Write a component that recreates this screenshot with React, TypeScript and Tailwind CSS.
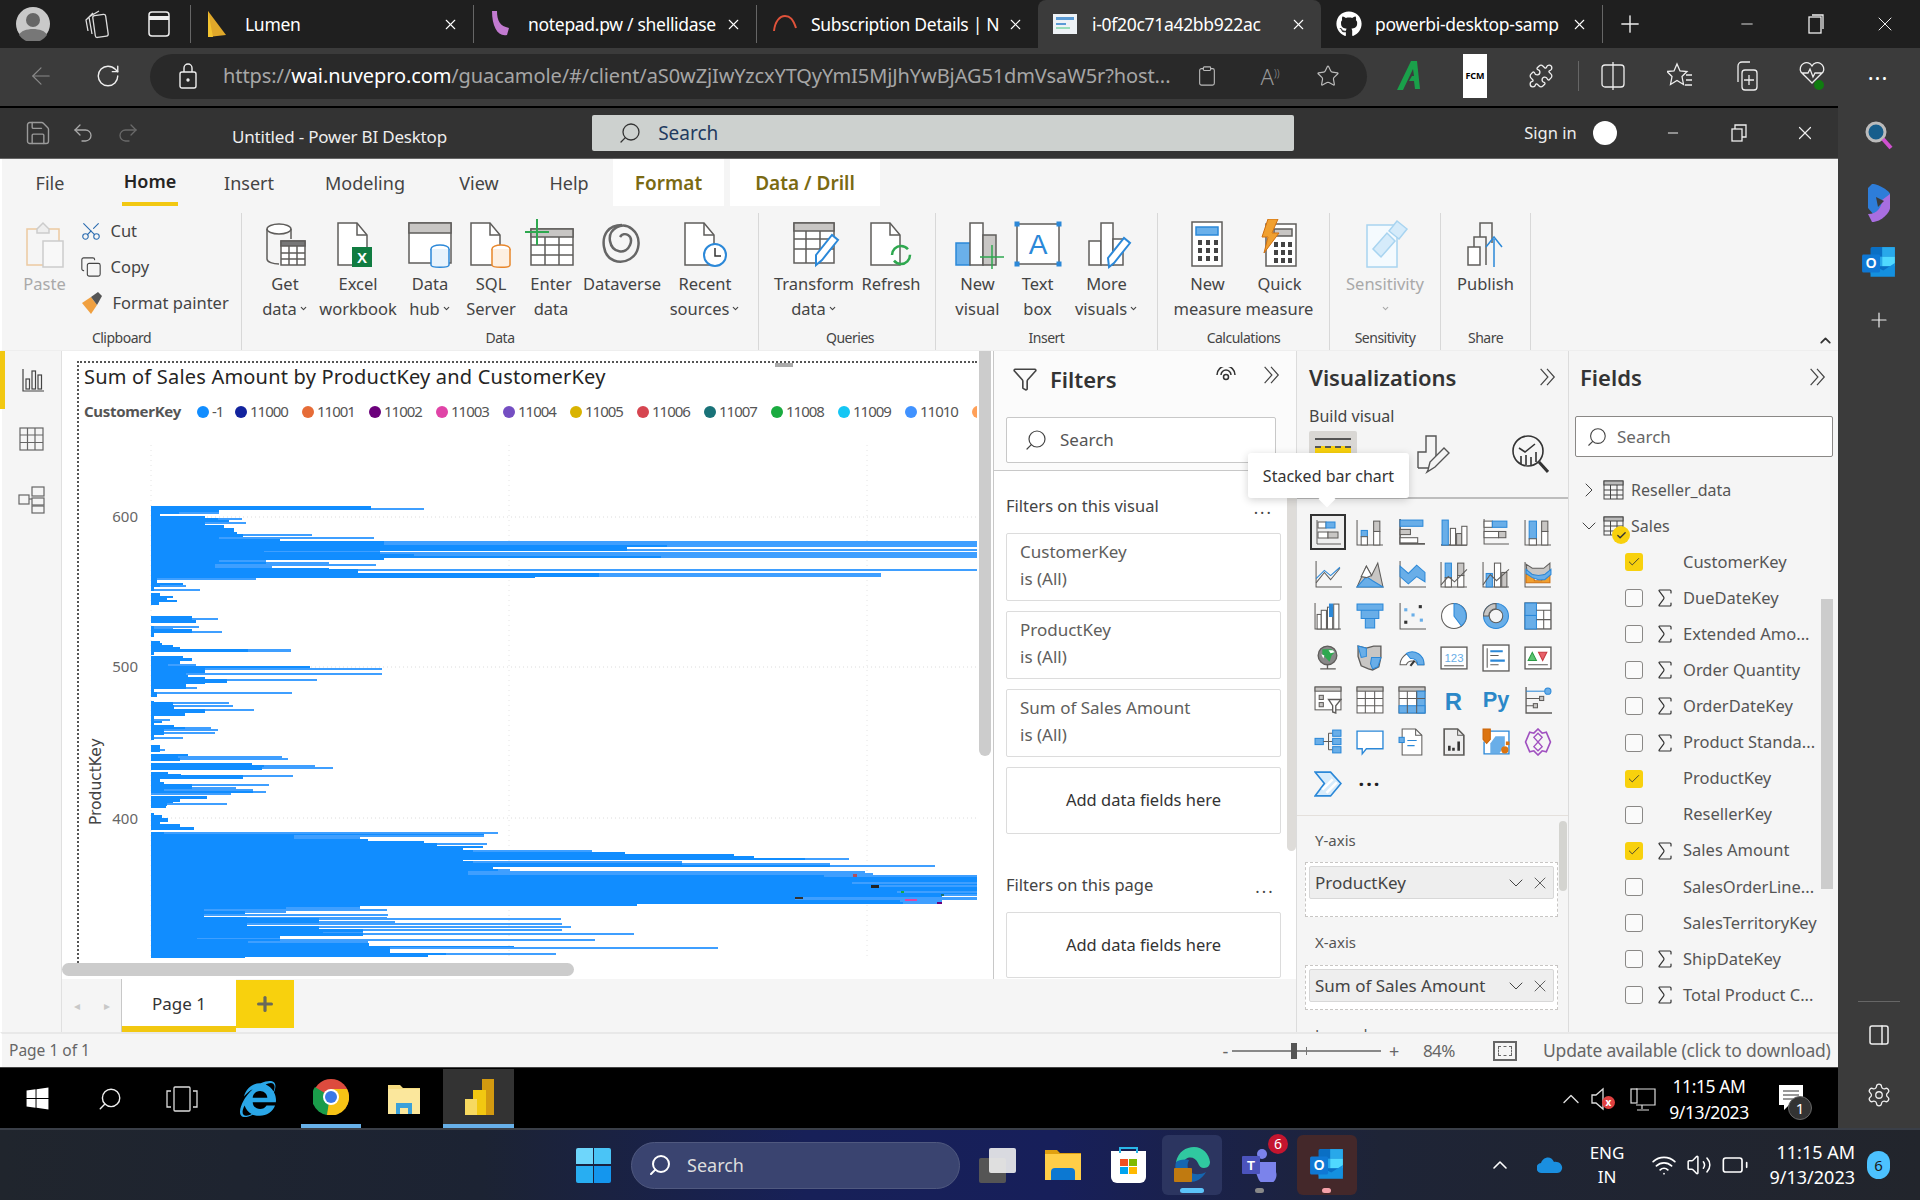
import React from 'react';
import { ArrowLeft, RotateCw, Clipboard, Star, Puzzle, Copy, Settings, PanelRight, Search, ChevronRight, ChevronDown, ChevronUp, X, Plus, Minus, Check, Wifi, Volume2, Battery, Scissors, Undo2, Redo2, Save, Funnel, Sigma } from 'lucide-react';
import { FaGithub, FaWindows, FaInternetExplorer } from 'react-icons/fa';

const G = '#5f5d5b', L = '#c8c6c4', B = '#2b88d8', F = '#69aee8', W = '#ffffff';

function Chevrons({ size = 22, color = '#444' }: { size?: number; color?: string }) {
  return <svg width={size} height={size} viewBox="0 0 22 22" fill="none" stroke={color} strokeWidth="1.3"><path d="M4 2l8 9-8 9M11 2l8 9-8 9" /></svg>;
}

function Ic({ children, s = 30 }: { children: React.ReactNode; s?: number }) {
  return <svg width={s} height={s} viewBox="0 0 27 27" fill="none" stroke={G} strokeWidth="1">{children}</svg>;
}
const Bars = (a: number[][], blue: number[] = []) => a.map((r, i) => <rect key={i} x={r[0]} y={r[1]} width={r[2]} height={r[3]} fill={blue.includes(i) ? F : r[4] ? L : W} stroke={blue.includes(i) ? B : G} />);

const vizIcons: React.ReactNode[] = [
  <><path d="M2 1v24h24" />{Bars([[3, 3, 8, 6], [11, 3, 9, 6, 0], [3, 13, 10, 6], [13, 13, 10, 6, 1]], [1])}</>,
  <><path d="M1 2v24h25" />{Bars([[5, 12, 6, 6], [5, 18, 6, 8], [17, 3, 6, 10, 1], [17, 13, 6, 13]], [0])}</>,
  <><path d="M2 1v24h24" strokeWidth="1.6" />{Bars([[2, 2, 22, 6], [2, 11, 10, 5, 1], [2, 19, 17, 5]], [0])}</>,
  <><path d="M1 26h25" strokeWidth="1.6" />{Bars([[2, 2, 6, 24], [10, 10, 5, 16], [16, 15, 5, 11, 1], [21, 8, 5, 18]], [0])}</>,
  <><path d="M2 1v24h24" />{Bars([[2, 3, 8, 6], [10, 3, 14, 6], [2, 13, 14, 6], [16, 13, 7, 6, 1]], [1])}</>,
  <><path d="M1 2v24h25" />{Bars([[5, 3, 7, 17], [5, 20, 7, 6], [17, 3, 6, 10, 1], [17, 13, 6, 13]], [0])}</>,
  <><path d="M2 1v25h25" /><path d="M2 22L10 12l6 7 9-11" stroke={G} /><path d="M2 18l8-8 6 5 9-8" stroke={B} /></>,
  <><path d="M1 26L10 6l5 9 6-12 5 23z" fill={L} /><path d="M1 26l9-10 6 4 10 6z" fill={F} stroke={B} /><path d="M10 6l5 9-5 2-5-1z" fill={W} /></>,
  <><path d="M2 1v25h25" /><path d="M2 6l8 7 8-8 8 7v9l-8-5-8 7-8-7z" fill={F} stroke={B} /></>,
  <><path d="M1 2v24h25" />{Bars([[5, 3, 6, 14], [17, 3, 6, 12, 1], [5, 17, 6, 9], [17, 15, 6, 11]], [0])}<path d="M1 24l7-8 6 5 12-12" /></>,
  <><path d="M1 2v24h25" />{Bars([[4, 13, 6, 13], [12, 3, 6, 23], [19, 12, 5, 14, 1]], [0])}<path d="M1 24l7-10 6 6 12-11" /></>,
  <><path d="M1 2v24h25" /><path d="M2 4l6 4h11l6-5v8l-5 5h-12l-5-4z" fill={L} /><path d="M2 14h7l1 6h7l2-6h6v8h-23z" fill="#f0a030" stroke="#d07010" /><path d="M2 9l6 5 6 1 6-1 6-5v5l-6 5h-6l-6-2-6-4z" fill={F} stroke={B} /></>,
  <><path d="M1 1v25h25" />{Bars([[3, 12, 4, 14], [7, 8, 5, 18], [13, 5, 5, 21], [19, 2, 5, 24]], [])}<rect x="15" y="2" width="3" height="12" fill={B} stroke={B} /></>,
  <><path d="M1 2h25v6h-25zM5 8h17v8h-17zM9 16h9v9h-9z" fill={F} stroke={B} /></>,
  <><path d="M2 1v25h25" /><rect x="6" y="18" width="3" height="3" fill="#333" stroke="none" /><rect x="20" y="3" width="3" height="3" fill="#333" stroke="none" /><rect x="6" y="6" width="3" height="3" fill={F} stroke="none" /><rect x="13" y="11" width="3" height="3" fill={F} stroke="none" /><rect x="21" y="16" width="3" height="3" fill={F} stroke="none" /></>,
  <><circle cx="13.5" cy="13.5" r="12" fill={W} /><path d="M13.5 1.5a12 12 0 0 1 7 21.5l-7-9.5z" fill={F} stroke={B} /></>,
  <><circle cx="13.5" cy="13.5" r="12" fill={F} stroke={B} /><path d="M13.5 1.5a12 12 0 0 0-12 12h5a7 7 0 0 1 7-7z" fill={L} stroke={G} /><circle cx="13.5" cy="13.5" r="6.5" fill="#f5f5f5" stroke={G} /></>,
  <><rect x="1" y="1" width="25" height="25" fill={W} strokeWidth="1.3" /><rect x="1" y="1" width="11" height="12" fill={F} stroke={B} /><rect x="1" y="13" width="11" height="13" fill={F} stroke={B} /><path d="M12 8h14M19 8v18M12 17h14" /></>,
  <><circle cx="13" cy="11" r="9" fill="#888" strokeWidth="1.3" /><path d="M8 5h9l3 3-3 3-2 6-4-4-3-3z" fill="#2ea84f" stroke="none" /><path d="M14 6h4l2 2-4 1zM7 10l3 1-1 3z" fill="#fff" stroke="none" /><path d="M6 24h15M13 20v4" strokeWidth="1.3" /></>,
  <><path d="M2 2l8 2 7-2h7v11l-2 9-6 3-4-1-7-3-3-9z" fill={L} strokeWidth="1.3" /><path d="M2 2l8 2v8l-5 1zM15 13h9l-3 9-5 2-2-5z" fill={F} stroke={B} /></>,
  <><path d="M2 20a11.5 11.5 0 0 1 23 0h-6a6 6 0 0 0-11 0z" fill={W} /><path d="M8 9a11.5 11.5 0 0 1 17 11h-6a6 6 0 0 0-7-6z" fill={F} stroke={B} /><path d="M12 21l4-5" strokeWidth="2" stroke="#333" /></>,
  <><rect x="1" y="3" width="25" height="21" fill="#fff" strokeWidth="1.3" /><text x="13.5" y="17" textAnchor="middle" fontSize="11" fill={F} stroke="none" fontFamily="Liberation Sans">123</text><path d="M4 21h19" /></>,
  <><rect x="1" y="1" width="25" height="25" fill="#fff" strokeWidth="1.3" /><path d="M5 4v19" /><path d="M8 7h12M8 16h14" stroke={B} strokeWidth="2" /><path d="M8 11h8M8 20h8" /></>,
  <><rect x="1" y="3" width="25" height="21" fill="#fff" strokeWidth="1.3" /><path d="M4 16l4-8 4 8z" fill="#5cc470" stroke="#2c9a44" /><path d="M14 8h8l-4 8z" fill="#e8626a" stroke="#c83a42" /><path d="M4 20h19" /></>,
  <><rect x="1" y="1" width="25" height="22" fill="#fff" /><rect x="1" y="1" width="25" height="4" fill={L} /><rect x="5" y="9" width="4" height="4" fill={L} /><rect x="5" y="16" width="4" height="4" fill={L} /><path d="M14 13h12l-5 6v7l-3-1v-6z" fill="#fff" strokeWidth="1.3" /></>,
  <><rect x="1" y="1" width="25" height="25" fill="#fff" /><rect x="1" y="1" width="25" height="4" fill={L} /><path d="M1 12h25M1 19h25M9 5v21M18 5v21" /></>,
  <><rect x="1" y="1" width="25" height="25" fill="#fff" /><rect x="1" y="1" width="25" height="4" fill={L} /><rect x="18" y="5" width="8" height="21" fill={F} stroke={B} /><rect x="1" y="19" width="25" height="7" fill={F} stroke={B} /><path d="M1 12h25M9 5v21M18 5v21" /></>,
  <><text x="13" y="23" textAnchor="middle" fontSize="23" fontWeight="700" fill="#2b88c8" stroke="none" fontFamily="Liberation Sans">R</text></>,
  <><text x="13.5" y="20" textAnchor="middle" fontSize="21" fontWeight="700" fill="#2b88c8" stroke="none" fontFamily="Liberation Sans">Py</text></>,
  <><path d="M2 1v25h25" strokeWidth="1.3" /><path d="M2 5h18" stroke={B} /><circle cx="23" cy="5" r="3" fill={F} stroke={B} /><path d="M2 12h14M2 19h10" /><rect x="15" y="10" width="4" height="4" fill={L} /><rect x="9" y="17" width="4" height="4" fill={L} /></>,
  <><rect x="1" y="10" width="8" height="6" fill={F} stroke={B} /><path d="M9 13h5M14 5v16M14 5h4M14 13h4M14 21h4" /><rect x="18" y="2" width="8" height="6" fill={F} stroke={B} /><rect x="18" y="10" width="8" height="6" fill={F} stroke={B} /><rect x="18" y="18" width="8" height="6" fill={F} stroke={B} /></>,
  <><path d="M1 3h25v17h-16l-4 5v-5h-5z" fill="#fff" stroke={B} strokeWidth="1.3" /></>,
  <><path d="M4 1h13l6 6v19h-19z" fill="#fff" /><path d="M17 1v6h6" /><rect x="1" y="9" width="5" height="5" fill={F} stroke={B} /><path d="M9 12h9M9 17h7" stroke={B} /></>,
  <><path d="M4 1h13l6 6v19h-19z" fill="#eee" strokeWidth="1.6" /><path d="M17 1v6h6" /><path d="M9 22v-5M13 22v-3M18 22v-9" stroke="#333" strokeWidth="2.5" /></>,
  <><path d="M6 3h20v22h-24v-12" stroke={B} strokeWidth="1.3" fill="#fff" /><path d="M13 8h9v9l-5 7h-9v-9z" fill={F} stroke="none" /><path d="M1 1h7v10l-3.500 4-3.500-4z" fill="#dc7410" stroke="#c96408" /><circle cx="22" cy="21" r="3.500" fill="#dc7410" stroke="none" /><rect x="23" y="13" width="3.500" height="3.500" fill="#dc7410" stroke="none" /></>,
  <><path d="M13.500 1l4 4 4-1 4 9.500-4 9.500-4-1-4 4-4-4-4 1-4-9.500 4-9.500 4 1z" stroke="#a050c0" strokeWidth="1.6" fill="none" /><path d="M13.500 5l4 4-4 4.500-4-4.500zM13.500 13.500l4 4.500-4 4-4-4z" stroke="#a050c0" strokeWidth="1.3" /></>,
  <><path d="M1 2h15l10 11-10 12h-15l9-12z" fill="#d8ecfb" stroke={B} strokeWidth="1.6" /><path d="M8 19l10-10M12 22l10-10" stroke="#fff" strokeWidth="2.5" /></>,
];

const chartA: number[][] = [
  [467, 580, 580], [473, 580, 663], [480, 342, 342], [485, 279, 342], [491, 250, 250], [497, 320, 320], [503, 340, 378], [510, 358, 358], [516, 320, 384], [525, 350, 350], [535, 365, 365], [545, 370, 370], [551, 380, 487], [558, 380, 380], [562, 342, 585], [568, 437, 437], [572, 600, 1530], [580, 600, 1530], [585, 1044, 1530], [592, 982, 982], [597, 982, 1530], [602, 412, 595], [606, 595, 1530], [612, 647, 1530], [618, 1035, 1530], [625, 600, 600], [630, 342, 415], [635, 415, 515], [642, 335, 588], [648, 335, 425], [654, 515, 515], [658, 560, 1530], [665, 560, 560], [670, 938, 1380], [676, 938, 1380], [680, 838, 838], [685, 245, 400], [692, 245, 245], [698, 285, 285], [705, 250, 290], [712, 240, 240], [718, 240, 312], [724, 235, 235], [730, 250, 250], [737, 270, 270], [745, 260, 260], [750, 276, 276], [756, 247, 247], [765, 235, 235],
  [798, 300, 300], [804, 300, 340], [810, 305, 305], [818, 235, 235], [827, 240, 310], [834, 240, 270], [838, 300, 300], [842, 300, 347], [848, 240, 240], [860, 235, 235], [873, 250, 250], [880, 253, 253], [886, 270, 270], [892, 280, 280],
  [896, 387, 455],
];
const chartB: number[][] = [
  [3, 387, 455], [6, 240, 240], [14, 235, 235], [18, 285, 285], [25, 300, 300], [34, 280, 280], [42, 262, 305], [48, 484, 484], [54, 320, 598], [62, 320, 320], [68, 290, 597], [74, 293, 293], [80, 320, 320], [86, 355, 495], [94, 355, 355], [98, 320, 320], [103, 290, 290], [110, 290, 307], [116, 240, 240], [125, 245, 456], [133, 245, 245], [142, 235, 235], [152, 240, 240], [157, 270, 358], [165, 272, 363], [172, 272, 272], [178, 320, 397], [185, 320, 320], [190, 288, 288], [198, 240, 240], [207, 240, 265], [213, 252, 252], [220, 240, 240], [226, 272, 272], [232, 288, 330], [238, 255, 340], [245, 255, 335], [255, 240, 240], [260, 240, 285], [270, 235, 235], [284, 250, 250], [296, 250, 257], [305, 235, 235], [311, 293, 293], [318, 278, 440], [325, 280, 450], [333, 235, 235], [338, 393, 393], [344, 413, 493], [351, 410, 520], [360, 235, 235], [365, 262, 262], [371, 282, 282], [376, 380, 458], [384, 380, 380], [388, 250, 250], [396, 255, 255], [402, 300, 420], [410, 300, 368], [418, 255, 395], [424, 395, 415], [430, 235, 360], [438, 323, 323], [447, 280, 280], [455, 270, 270], [460, 260, 354], [468, 258, 258], [474, 235, 235], [488, 240, 240], [495, 252, 252], [504, 262, 262], [515, 250, 250], [522, 280, 280], [530, 302, 302], [540, 235, 235], [545, 255, 779], [551, 757, 757], [556, 460, 757], [562, 460, 563], [568, 575, 575], [574, 663, 663], [580, 683, 762], [588, 755, 755], [595, 725, 725], [600, 740, 927], [606, 978, 978], [612, 1150, 1150], [618, 1180, 1180], [624, 1260, 1330], [630, 725, 725], [634, 740, 1068], [640, 1068, 1300], [646, 1300, 1465], [652, 772, 772], [658, 780, 798], [664, 732, 1355], [670, 732, 1368], [676, 1290, 1530], [682, 1530, 1530], [696, 1335, 1530], [702, 1530, 1530], [706, 1365, 1530], [712, 1530, 1530], [724, 1405, 1530], [730, 1530, 1530], [733, 1475, 1530], [740, 1245, 1530], [747, 1245, 1530], [750, 1410, 1475], [756, 1415, 1475], [761, 997, 997], [767, 563, 563], [770, 447, 563], [776, 318, 605], [784, 383, 447], [792, 318, 607], [800, 385, 605], [805, 498, 878], [812, 498, 618], [820, 385, 880], [827, 498, 893], [836, 567, 880], [845, 505, 567], [850, 567, 992], [858, 438, 438], [863, 308, 438], [868, 438, 932], [874, 388, 575], [880, 577, 577], [887, 804, 804], [892, 610, 1124], [898, 610, 610], [908, 698, 870], [915, 670, 670], [922, 382, 382], [927, 380, 475],
];
const rowsFull = [
  ...chartA.map(r => [Math.round(350 + r[0] / 3), r[1] / 1.568, r[2] / 1.568]),
  ...chartB.map(r => [Math.round(650 + r[0] / 3), r[1] / 1.568, r[2] / 1.568]),
];

function Chart() {
  return (
    <svg width="898" height="528" viewBox="78 430 898 528" className="block">
      {[150, 508, 866].map(x => <path key={x} d={`M${x} 445V958`} stroke="#e4e4e4" strokeDasharray="1 4" />)}
      {[517, 667, 818].map(y => <path key={y} d={`M150 ${y}H976`} stroke="#dcdcdc" strokeDasharray="1 3" />)}
      {rowsFull.map((r, i) => {
        const next = i < rowsFull.length - 1 ? rowsFull[i + 1][0] : 958;
        const h = next - r[0];
        if (h <= 0) return null;
        return (
          <g key={i} shapeRendering="crispEdges">
            <rect x="150" y={r[0]} width={Math.max(r[1] - 150, 0)} height={h} fill="#118dff" />
            {r[2] > r[1] && <rect x={r[1]} y={r[0]} width={r[2] - r[1]} height={h >= 3 ? h - 1 : h} fill="#3f9fff" />}
          </g>
        );
      })}
      <rect x="852" y="874" width="4" height="3" fill="#b05060" /><rect x="870" y="885" width="8" height="3" fill="#222" /><rect x="900" y="891" width="3" height="2" fill="#1aab40" /><rect x="940" y="894" width="3" height="2" fill="#197278" /><rect x="794" y="897" width="8" height="2" fill="#333" /><rect x="904" y="899" width="12" height="2" fill="#e044a7" /><rect x="936" y="902" width="5" height="2" fill="#6b007b" />
      <text x="137" y="522" textAnchor="end" fontSize="15" fill="#666" fontFamily="Noto Sans">600</text>
      <text x="137" y="672" textAnchor="end" fontSize="15" fill="#666" fontFamily="Noto Sans">500</text>
      <text x="137" y="824" textAnchor="end" fontSize="15" fill="#666" fontFamily="Noto Sans">400</text>
      <text transform="translate(100 825) rotate(-90)" fontSize="15.500" fill="#444" fontFamily="DejaVu Sans">ProductKey</text>
    </svg>
  );
}

function RB({ w, lines, caret, children, dim }: { w: number; lines: string[]; caret?: boolean; children: React.ReactNode; dim?: boolean }) {
  return (
    <div className={`flex flex-col items-center ${dim ? 'text-[#a9a9a9]' : 'text-[#444]'}`} style={{ width: w }}>
      <div className="h-[58px] w-[52px] pt-[6px] flex items-center justify-center">{children}</div>
      {lines.map((l, i) => (
        <div key={i} className="h-[25px] leading-[25px] text-[16.500px] whitespace-nowrap flex items-center gap-[2px]">
          {l}{caret && i === lines.length - 1 && <ChevronDown size={9} strokeWidth={3} />}
        </div>
      ))}
    </div>
  );
}
function RI({ children }: { children: React.ReactNode }) {
  return <svg width="52" height="52" viewBox="0 0 52 52" fill="none" stroke="#5f5d5b" strokeWidth="1.5">{children}</svg>;
}
const Doc = <path d="M6 4h19l10 12v30h-29z" fill="#fff" />;
const DocF = <path d="M25 4v12h10" />;

function Group({ w, label, children, pl = 0 }: { w: number; label: string; children: React.ReactNode; pl?: number }) {
  return (
    <div className="flex flex-col items-center shrink-0 h-[137px] border-r border-[#d8d8d8]" style={{ width: w, paddingLeft: pl }}>
      <div className="flex flex-1 justify-center">{children}</div>
      <div className="h-[22px] leading-[20px] text-[14px] tracking-[-0.5px] text-[#444]">{label}</div>
    </div>
  );
}

function Cell({ w, children, className = '' }: { w: number; children?: React.ReactNode; className?: string }) {
  return <div className={`flex items-center justify-center shrink-0 ${className}`} style={{ width: w }}>{children}</div>;
}

function BrowserTab({ w, icon, title, active }: { w: number; icon: React.ReactNode; title: string; active?: boolean }) {
  return (
    <div className={`flex items-center shrink-0 h-12 pl-[15px] pr-[14px] text-white text-[17.500px] ${active ? 'bg-[#3b3b3b] rounded-t-[8px]' : ''}`} style={{ width: w }}>
      <div className="w-[39px] flex items-center shrink-0">{icon}</div>
      <div className="flex-1 overflow-hidden whitespace-nowrap tracking-[-0.3px]">{title}</div>
      <X size={17} strokeWidth={1.5} className="ml-2 shrink-0" />
    </div>
  );
}
const Sep = () => <div className="w-px h-[38px] bg-[#666] shrink-0" />;

function FilterCard({ a, b }: { a: string; b: string }) {
  return (
    <div className="h-[68px] w-[275px] border border-[#dcdcdc] rounded-[2px] bg-white px-[13px] pt-[4px] text-[17px] leading-[27px] text-[#605e5c]">
      <div>{a}</div><div>{b}</div>
    </div>
  );
}
function AddCard({ h }: { h: number }) {
  return <div className="w-[275px] border border-[#dcdcdc] rounded-[2px] bg-white flex items-center justify-center text-[16.500px] text-[#333]" style={{ height: h }}>Add data fields here</div>;
}
function WellBox({ text, h }: { text: string; h: number }) {
  return (
    <div className="ml-[8px] w-[253px] border border-dashed border-[#c8c6c4] bg-white p-[3px]" style={{ height: h }}>
      <div className="h-[33px] bg-[#eeeeee] border border-[#d8d8d8] rounded-[2px] flex items-center pl-[5px] pr-[3px] text-[17px] text-[#444]">
        <span className="flex-1 whitespace-nowrap">{text}</span>
        <ChevronDown size={24} strokeWidth={1} className="mr-[2px]" />
        <X size={20} strokeWidth={1} />
      </div>
    </div>
  );
}
function Field({ name, sigma, checked }: { name: string; sigma?: boolean; checked?: boolean }) {
  return (
    <div className="h-[36.100px] flex items-center pl-[56px]">
      <div className={`w-[18px] h-[18px] rounded-[3px] flex items-center justify-center shrink-0 ${checked ? 'bg-[#f8d10d]' : 'border border-[#8a8886] bg-[#fafafa]'}`}>
        {checked && <Check size={14} strokeWidth={1.5} color="#333" />}
      </div>
      <div className="w-[40px] flex justify-center shrink-0 pl-[3px]">
        {sigma && <Sigma size={24} strokeWidth={1.2} color="#333" />}
      </div>
      <div className="text-[16.500px] text-[#555] whitespace-nowrap">{name}</div>
    </div>
  );
}
function TableIc() {
  return <svg width="21" height="20" viewBox="0 0 21 20" fill="none" stroke="#444" strokeWidth="1"><rect x="1" y="1" width="19" height="18" /><rect x="1" y="1" width="19" height="4" fill="#bbb" /><path d="M1 10h19M1 15h19M7.500 5v14M14 5v14" /></svg>;
}

const legend = [['-1', '#118DFF'], ['11000', '#12239E'], ['11001', '#E66C37'], ['11002', '#6B007B'], ['11003', '#E044A7'], ['11004', '#744EC2'], ['11005', '#D9B300'], ['11006', '#D64550'], ['11007', '#197278'], ['11008', '#1AAB40'], ['11009', '#15C6F4'], ['11010', '#4092FF'], ['', '#FFA058']];

function OutlookLogo({ s = 34 }: { s?: number }) {
  return (
    <svg width={s} height={s} viewBox="0 0 34 34">
      <rect x="9" y="2" width="23" height="26" rx="1.500" fill="#0a6fc4" />
      <rect x="20" y="2" width="12" height="9" fill="#28a8ea" /><rect x="9" y="11" width="11" height="9" fill="#28a8ea" /><rect x="20" y="11" width="12" height="9" fill="#50d9ff" />
      <path d="M9 18l12 6 11-7v13h-23z" fill="#1490df" />
      <rect x="1" y="9" width="17" height="17" rx="1.500" fill="#0f78d4" />
      <text x="9.500" y="22" textAnchor="middle" fontSize="13" fontWeight="700" fill="#fff" fontFamily="Liberation Sans">O</text>
    </svg>
  );
}

export default function App() {
  return (
    <div className="relative w-[1920px] h-[1200px] overflow-hidden flex flex-col bg-black font-['Noto_Sans','Open_Sans',sans-serif]">
      {/* Browser tabs */}
      <div className="h-12 bg-[#1f1f1f] flex items-center shrink-0">
        <div className="w-[66px] flex justify-center shrink-0">
          <svg width="34" height="34" viewBox="0 0 34 34"><circle cx="17" cy="17" r="17" fill="#c9c9c9" /><circle cx="17" cy="13" r="7" fill="#666" /><path d="M3 28c3-8 25-8 28 0a17 17 0 0 1-28 0z" fill="#777" /></svg>
        </div>
        <Cell w={62}><svg width="26" height="30" viewBox="0 0 26 30" fill="none" stroke="#ddd" strokeWidth="1.3"><rect x="10" y="6" width="13" height="22" rx="2" transform="rotate(-8 16 17)" /><path d="M8 25L5 8l10-6M4 22L2 11l7-7" /></svg></Cell>
        <Cell w={62}><svg width="22" height="26" viewBox="0 0 22 26" fill="none" stroke="#eee" strokeWidth="1.5"><rect x="1" y="1" width="20" height="24" rx="3" /><path d="M1 7h20" strokeWidth="4" /></svg></Cell>
        <Sep />
        <BrowserTab w={282} title="Lumen" icon={<svg width="22" height="26" viewBox="0 0 22 26"><path d="M2 0l18 24-18 2z" fill="#e0a82a" /><path d="M2 0l5 26h-5z" fill="#f4c430" /></svg>} />
        <Sep />
        <BrowserTab w={282} title="notepad.pw / shellidase" icon={<svg width="22" height="26" viewBox="0 0 22 26"><path d="M3 0h5c0 10 3 15 12 17l-2 7c-9 2-15-8-15-24z" fill="#c27ad0" /></svg>} />
        <Sep />
        <BrowserTab w={281} title="Subscription Details | N" icon={<svg width="26" height="22" viewBox="0 0 26 22" fill="none" stroke="#e0523a" strokeWidth="2"><path d="M2 18C3 8 8 3 13 3s8 3 11 12" /></svg>} />
        <BrowserTab w={283} active title="i-0f20c71a42bb922ac" icon={<svg width="24" height="20" viewBox="0 0 24 20"><rect width="24" height="20" fill="#eef2f6" /><rect x="3" y="3" width="18" height="3" fill="#5b9bd5" /><rect x="3" y="9" width="10" height="2" fill="#5b9bd5" /><rect x="3" y="13" width="14" height="2" fill="#9db" /></svg>} />
        <BrowserTab w={281} title="powerbi-desktop-samp" icon={<FaGithub size={26} color="#fff" />} />
        <Sep />
        <Cell w={54}><Plus size={28} strokeWidth={1.2} color="#eee" /></Cell>
        <div className="ml-auto flex">
          <Cell w={69}><Minus size={18} strokeWidth={1.2} color="#eee" /></Cell>
          <Cell w={69}><svg width="16" height="20" viewBox="0 0 16 20" fill="none" stroke="#eee" strokeWidth="1.3"><rect x="1" y="3" width="12" height="16" /><path d="M4 1h11v14" /></svg></Cell>
          <Cell w={70}><X size={24} strokeWidth={1} color="#eee" /></Cell>
        </div>
      </div>

      {/* Address bar */}
      <div className="h-[58px] bg-[#3b3b3b] flex items-center shrink-0 pb-[2px]">
        <Cell w={82}><ArrowLeft size={28} strokeWidth={1} color="#8a8a8a" /></Cell>
        <Cell w={52}><RotateCw size={26} strokeWidth={1.3} color="#eee" /></Cell>
        <div className="ml-[16px] w-[1217px] h-[45px] rounded-full bg-[#292929] flex items-center shrink-0">
          <Cell w={76}><svg width="18" height="26" viewBox="0 0 18 26" fill="none" stroke="#eee" strokeWidth="1.4"><rect x="1" y="9" width="16" height="16" rx="2" /><path d="M5 9V5a4 4 0 0 1 8 0v4" /><circle cx="9" cy="17" r="1" fill="#eee" /></svg></Cell>
          <div className="w-[950px] shrink-0 whitespace-nowrap overflow-hidden text-[20px] tracking-[-0.1px] text-[#a6a6a6] ml-[-3px]">https://<span className="text-white">wai.nuvepro.com</span>/guacamole/#/client/aS0wZjIwYzcxYTQyYmI5MjJhYwBjAG51dmVsaW5r?host...</div>
          <Cell w={68}><Clipboard size={22} strokeWidth={1.2} color="#bbb" /></Cell>
          <Cell w={58}><span className="text-[22px] text-[#999] font-light">A<span className="text-[10px] align-super">))</span></span></Cell>
          <Cell w={58}><Star size={24} strokeWidth={1.2} color="#bbb" /></Cell>
        </div>
        <Cell w={74} className="ml-[5px]"><svg width="26" height="30" viewBox="0 0 26 30"><path d="M15 0h6l3 28h-5l-1-8-5 0 3-5 2 0-1-7-10 21h-6z" fill="#1aa04a" /></svg></Cell>
        <Cell w={58}><div className="w-6 h-[44px] bg-white flex items-center justify-center text-[9px] font-bold text-black">FCM</div></Cell>
        <Cell w={74}><Puzzle size={26} strokeWidth={1.2} color="#eee" /></Cell>
        <div className="w-px h-[30px] bg-[#666]" />
        <Cell w={68}><svg width="24" height="28" viewBox="0 0 24 28" fill="none" stroke="#eee" strokeWidth="1.3"><rect x="1" y="3" width="22" height="22" rx="3" /><path d="M12 0v28" /></svg></Cell>
        <Cell w={66}><svg width="26" height="28" viewBox="0 0 26 28" fill="none" stroke="#eee" strokeWidth="1.3"><path d="M10 2l3 7 7 .5-5 5 1.500 8-6.500-4-6.500 4 1.500-8-5-5 7-.5z" /><path d="M19 13h6M19 18h6M18 23h7" /></svg></Cell>
        <Cell w={66}><svg width="26" height="30" viewBox="0 0 26 30" fill="none" stroke="#eee" strokeWidth="1.3"><path d="M5 21V5a4 4 0 0 1 4-4h8" /><rect x="9" y="9" width="15" height="20" rx="3" /><path d="M16 14v10M11 19h10" /></svg></Cell>
        <Cell w={66}><svg width="28" height="30" viewBox="0 0 28 30" fill="none" stroke="#eee" strokeWidth="1.3"><path d="M14 22L3 11a6 6 0 0 1 11-6 6 6 0 0 1 11 6zM4 12h6l2-4 3 8 2-4h7" /><circle cx="21" cy="24" r="5" fill="#107c10" stroke="none" /></svg></Cell>
        <Cell w={66}><span className="text-white text-[22px] leading-none tracking-[1px] pb-[10px]">...</span></Cell>
      </div>

      <div className="flex flex-1 min-h-0">
        <div className="w-[1838px] shrink-0 flex flex-col">
          {/* Title bar */}
          <div className="h-[53px] shrink-0 bg-[#333333] border-t-2 border-black border-b border-b-[#666] flex items-center text-[#eee]">
            <Cell w={60} className="pl-[16px]"><Save size={28} strokeWidth={1.2} color="#9a9a9a" /></Cell>
            <Cell w={45}><Undo2 size={24} strokeWidth={1.3} color="#aaa" /></Cell>
            <Cell w={45}><Redo2 size={24} strokeWidth={1.3} color="#6a6a6a" /></Cell>
            <div className="ml-[82px] w-[361px] text-[17px] tracking-[-0.2px] pt-[7px]">Untitled - Power BI Desktop</div>
            <div className="w-[702px] h-[36px] rounded-[2px] bg-[#cdd1cf] flex items-center pl-[26px] text-[19px] text-[#1f3a5f] shrink-0">
              <Search size={24} strokeWidth={1.3} color="#333" className="-scale-x-100 mr-[16px]" />Search
            </div>
            <div className="ml-[230px] text-[16.500px] w-[56px] whitespace-nowrap">Sign in</div>
            <div className="ml-[13px] w-[24px] h-[24px] rounded-full bg-white" />
            <Cell w={66} className="ml-[23px]"><Minus size={16} strokeWidth={1.5} /></Cell>
            <Cell w={66}><svg width="16" height="18" viewBox="0 0 16 18" fill="none" stroke="#eee" strokeWidth="1.3"><rect x="1" y="5" width="10" height="12" /><path d="M4 5V1h11v12h-4" /></svg></Cell>
            <Cell w={66}><X size={22} strokeWidth={1.3} /></Cell>
          </div>

          {/* Ribbon */}
          <div className="h-[191px] shrink-0 bg-[#f5f5f5] flex flex-col border-l-2 border-white">
            <div className="h-[47px] flex text-[18px] text-[#444] relative">
              <Cell w={96} className="h-[47px] pt-[2px]">File</Cell>
              <Cell w={56} className="h-[47px] pt-[2px] ml-[24px] font-semibold text-[#252423] relative border-b-4 border-[#f2c811]">Home</Cell>
              <Cell w={90} className="h-[47px] pt-[2px] ml-[26px]">Insert</Cell>
              <Cell w={110} className="h-[47px] pt-[2px] ml-[16px]">Modeling</Cell>
              <Cell w={60} className="h-[47px] pt-[2px] ml-[29px]">View</Cell>
              <Cell w={60} className="h-[47px] pt-[2px] ml-[30px]">Help</Cell>
              <Cell w={111} className="h-[47px] pt-[2px] ml-[14px] bg-white font-semibold text-[19px] text-[#7a6a12]">Format</Cell>
              <Cell w={150} className="h-[47px] pt-[2px] ml-[6px] bg-white font-semibold text-[19px] text-[#7a6a12]">Data / Drill</Cell>
            </div>
            <div className="flex pt-[7px] flex-1 relative">
              <Group w={240} label="Clipboard">
                <div className="flex w-full">
                  <RB w={86} lines={['Paste']} dim>
                    <svg width="52" height="52" viewBox="0 0 52 52" fill="none" stroke="#ecc9a0" strokeWidth="1.5"><rect x="8" y="10" width="32" height="36" /><path d="M18 10l6-6 6 6v4h-12z" fill="#eee" stroke="#ccc" /><rect x="24" y="22" width="20" height="26" fill="#f8f8f8" stroke="#ccc" /></svg>
                  </RB>
                  <div className="flex flex-col w-[162px] text-[16.500px] text-[#444] -ml-[8px]">
                    <div className="h-[36px] flex items-center gap-[9px]"><Scissors size={22} strokeWidth={1.2} color="#2b6cb0" className="-rotate-90 shrink-0" />Cut</div>
                    <div className="h-[36px] flex items-center gap-[9px]"><Copy size={22} strokeWidth={1.2} color="#444" className="shrink-0" />Copy</div>
                    <div className="h-[36px] flex items-center gap-[9px] whitespace-nowrap"><svg width="24" height="24" viewBox="0 0 24 24" className="shrink-0"><path d="M2 12l9-6 6 8-6 9z" fill="#f0a040" /><path d="M11 6l7-5 4 4-5 9z" fill="#555" /></svg>Format painter</div>
                  </div>
                </div>
              </Group>
              <Group w={517} label="Data">
                <RB w={70} lines={['Get', 'data']} caret><RI><ellipse cx="20" cy="10" rx="12" ry="5" fill="#fff" /><path d="M8 10v30c0 3 6 5 12 5M32 10v10" /><rect x="22" y="22" width="24" height="24" fill="#fff" /><rect x="22" y="22" width="24" height="5" fill="#777" /><path d="M22 34h24M22 40h24M30 27v19M38 27v19" /></RI></RB>
                <RB w={76} lines={['Excel', 'workbook']}><RI>{Doc}{DocF}<rect x="20" y="28" width="20" height="20" fill="#107c41" stroke="none" /><text x="30" y="44" textAnchor="middle" fontSize="15" fontWeight="700" fill="#fff" stroke="none" fontFamily="Liberation Sans">X</text></RI></RB>
                <RB w={68} lines={['Data', 'hub']} caret><RI><rect x="5" y="4" width="42" height="40" fill="#fff" /><rect x="5" y="4" width="42" height="10" fill="#c8c6c4" /><ellipse cx="36" cy="30" rx="9" ry="4" fill="#fff" stroke="#2b88d8" /><path d="M27 30v16c0 3 18 3 18 0v-16" fill="#e8f3fc" stroke="#2b88d8" /></RI></RB>
                <RB w={54} lines={['SQL', 'Server']}><RI>{Doc}{DocF}<ellipse cx="36" cy="30" rx="9" ry="4" fill="#fff" stroke="#e8862a" /><path d="M27 30v16c0 3 18 3 18 0v-16" fill="#fdf0e2" stroke="#e8862a" /></RI></RB>
                <RB w={66} lines={['Enter', 'data']}><RI><rect x="6" y="10" width="42" height="36" fill="#fff" /><rect x="6" y="10" width="42" height="8" fill="#c8c6c4" /><path d="M6 26h42M6 36h42M20 18v28M34 18v28" /><path d="M12 0v26M0 13h24" stroke="#2ea84f" strokeWidth="2" /></RI></RB>
                <RB w={76} lines={['Dataverse']}><RI><path d="M26 6c-14 0-20 10-18 22 2 14 16 18 26 12 10-6 12-22 2-30s-24 0-22 12 16 14 20 4-6-14-10-8" stroke="#666" strokeWidth="2.5" /></RI></RB>
                <RB w={90} lines={['Recent', 'sources']} caret><RI>{Doc}{DocF}<circle cx="36" cy="36" r="11" fill="#fff" stroke="#2b88d8" strokeWidth="2" /><path d="M36 29v8h6" stroke="#333" /></RI></RB>
              </Group>
              <Group w={177} label="Queries" pl={6}>
                <RB w={82} lines={['Transform', 'data']} caret><RI><rect x="6" y="4" width="40" height="40" fill="#fff" /><rect x="6" y="4" width="40" height="8" fill="#c8c6c4" /><path d="M6 20h40M6 30h40M18 12v32M32 12v32" /><path d="M28 46l0-10 16-20 6 5-16 20z" fill="#fff" stroke="#2b88d8" strokeWidth="2" /></RI></RB>
                <RB w={72} lines={['Refresh']}><RI>{Doc}{DocF}<circle cx="36" cy="36" r="9" stroke="#2ea84f" strokeWidth="2.500" strokeDasharray="22 6" /></RI></RB>
              </Group>
              <Group w={222} label="Insert">
                <RB w={58} lines={['New', 'visual']}><RI><rect x="4" y="24" width="14" height="22" fill="#6ab0ea" stroke="#2b88d8" /><rect x="18" y="4" width="13" height="42" fill="#fff" /><rect x="31" y="16" width="13" height="30" fill="#c8c6c4" /><path d="M40 26v24M28 38h24" stroke="#2ea84f" strokeWidth="1.500" /></RI></RB>
                <RB w={62} lines={['Text', 'box']}><RI><rect x="5" y="5" width="42" height="40" fill="#fff" /><text x="26" y="35" textAnchor="middle" fontSize="28" fill="#2b88d8" stroke="none" fontFamily="Liberation Sans">A</text>{[[5, 5], [47, 5], [5, 45], [47, 45]].map(([x, y], i) => <rect key={i} x={x - 2.5} y={y - 2.5} width="5" height="5" fill="#2b88d8" stroke="none" />)}</RI></RB>
                <RB w={76} lines={['More', 'visuals']} caret><RI><rect x="8" y="22" width="12" height="24" fill="#fff" /><rect x="20" y="4" width="12" height="42" fill="#fff" /><rect x="32" y="20" width="10" height="26" fill="#fff" /><path d="M28 48l-1-9 16-20 6 5-16 20z" fill="#fff" stroke="#2b88d8" strokeWidth="2" /></RI></RB>
              </Group>
              <Group w={172} label="Calculations">
                <RB w={72} lines={['New', 'measure']}><RI><rect x="10" y="3" width="30" height="44" fill="#fff" /><rect x="14" y="8" width="22" height="8" fill="#6ab0ea" stroke="#2b88d8" />{[21, 29, 37].flatMap(y => [16, 24, 32].map(x => <rect key={x + '-' + y} x={x} y={y} width="4" height="5" fill="#444" stroke="none" />))}</RI></RB>
                <RB w={72} lines={['Quick', 'measure']}><RI><rect x="12" y="5" width="30" height="42" fill="#fff" /><rect x="20" y="10" width="18" height="7" fill="#c8c6c4" />{[23, 31, 39].flatMap(y => [20, 27, 34].map(x => <rect key={x + '-' + y} x={x} y={y} width="4" height="5" fill="#444" stroke="none" />))}<path d="M14 0h10l-6 14h7l-15 20 4-16h-6z" fill="#f0a030" stroke="#d07010" strokeWidth="1" /></RI></RB>
              </Group>
              <Group w={111} label="Sensitivity">
                <RB w={110} lines={['Sensitivity', ' ']} caret dim><svg width="52" height="52" viewBox="0 0 52 52" fill="none" stroke="#a8d4f0" strokeWidth="1.5"><rect x="8" y="6" width="30" height="42" fill="#f4fafe" /><path d="M14 30l14-16 8 8-14 16z" fill="#d5ebfa" /><path d="M30 12l8-10 10 8-8 10z" fill="#d5ebfa" /></svg></RB>
              </Group>
              <Group w={90} label="Share">
                <RB w={90} lines={['Publish']}><RI><rect x="8" y="28" width="12" height="18" fill="#fff" /><path d="M14 28v-10h12v28M20 18V4h12v20" /><path d="M34 48V20M26 28l8-10 8 10" stroke="#2b88d8" strokeWidth="1.500" /></RI></RB>
              </Group>
              <div className="flex-1 flex items-end justify-end pb-[1px] pr-[4px]"><ChevronUp size={17} strokeWidth={2.5} color="#333" /></div>
            </div>
          </div>

          {/* Main */}
          <div className="h-[682px] shrink-0 flex border-l-2 border-white border-t border-t-[#eeeeee]">
            <div className="w-[60px] shrink-0 bg-[#f5f5f5] border-r border-[#e0e0e0] flex flex-col">
              <div className="h-[58px] border-l-[5px] border-[#f2c811] -ml-[2px] flex items-center justify-center pr-[1px]"><svg width="24" height="24" viewBox="0 0 24 24" fill="none" stroke="#444" strokeWidth="1.2"><path d="M2 1v22h21" /><rect x="5" y="11" width="3.500" height="10" /><rect x="11" y="3" width="3.500" height="18" /><rect x="17" y="7" width="3.500" height="14" /></svg></div>
              <div className="h-[60px] flex items-center justify-center"><svg width="25" height="24" viewBox="0 0 25 24" fill="none" stroke="#666" strokeWidth="1.2"><rect x="1" y="1" width="23" height="22" /><path d="M1 8h23M1 15.500h23M8.500 1v22M16 1v22" /></svg></div>
              <div className="h-[62px] flex items-center justify-center"><svg width="28" height="28" viewBox="0 0 28 28" fill="none" stroke="#666" strokeWidth="1.2"><rect x="14" y="1" width="12" height="9" /><rect x="1" y="9" width="10" height="9" /><rect x="14" y="12" width="12" height="7" /><rect x="14" y="20" width="12" height="7" /><path d="M11 13h3" /></svg></div>
            </div>
            <div className="w-[1234px] shrink-0 flex flex-col">
              <div className="h-[628px] flex shrink-0">
                {/* Canvas */}
                <div className="w-[931px] shrink-0 bg-white flex flex-col">
                  <div className="flex h-[612px] shrink-0">
                    <div className="flex-1 min-w-0 pt-[10px] pl-[15px]">
                      <div className="relative border-l-2 border-t-2 border-dotted border-[#555] h-[602px] overflow-hidden">
                        <div className="pl-[5px] h-[30px] leading-[28px] text-[20px] text-[#252423] whitespace-nowrap tracking-[0.2px]">Sum of Sales Amount by ProductKey and CustomerKey</div>
                        <div className="pl-[5px] h-[37px] flex items-center text-[15px] text-[#555] whitespace-nowrap overflow-hidden">
                          <span className="font-bold w-[113px] shrink-0 tracking-[-0.3px]">CustomerKey</span>
                          {legend.map(([t, c], i) => (
                            <span key={c} className="flex items-center shrink-0" style={{ width: i === 0 ? 38 : 67 }}>
                              <span className="w-[12px] h-[12px] rounded-full mr-[3px] shrink-0" style={{ background: c }} />
                              <span className="tracking-[-1px]">{t}</span>
                            </span>
                          ))}
                        </div>
                        <Chart />
                        <div className="absolute left-[696px] top-0 w-[18px] h-[4px] bg-[#aaa]" />
                      </div>
                    </div>
                    <div className="w-[16px] shrink-0 pl-[2px]"><div className="w-[12px] h-[405px] bg-[#cccccc] rounded-b-full" /></div>
                  </div>
                  <div className="h-[16px] pb-[3px]"><div className="h-[13px] w-[512px] rounded-full bg-[#cccccc]" /></div>
                </div>
                {/* Filters */}
                <div className="w-[303px] shrink-0 relative bg-white border-l border-[#c8c8c8] overflow-hidden">
                  <div className="h-[120px] border-b border-[#c8c8c8] bg-[#fbfbfb]">
                    <div className="h-[66px] flex items-center pl-[18px] pb-[10px]">
                      <Funnel size={26} strokeWidth={1.5} color="#444" />
                      <span className="ml-[12px] text-[22px] font-semibold text-[#333]">Filters</span>
                      <svg width="20" height="14" viewBox="0 0 20 14" fill="none" stroke="#333" strokeWidth="1.5" className="ml-[100px] mb-[10px]"><path d="M1 8a9 9 0 0 1 18 0" /><path d="M5 8a5 5 0 0 1 10 0" /><circle cx="10" cy="10" r="2.500" /></svg>
                      <span className="ml-[25px] mb-[8px]"><Chevrons size={20} /></span>
                    </div>
                    <div className="ml-[12px] w-[270px] h-[46px] border border-[#c8c8c8] rounded-[2px] bg-white flex items-center pl-[17px] text-[17px] text-[#555]">
                      <Search size={24} strokeWidth={1.2} color="#444" className="-scale-x-100 mr-[12px]" />Search
                    </div>
                  </div>
                  <div className="pl-[12px]">
                    <div className="h-[62px] flex items-center text-[16.500px] text-[#444] pt-[9px] whitespace-nowrap">Filters on this visual<span className="ml-[95px] tracking-[2px] mt-[4px]">...</span></div>
                    <div className="flex flex-col gap-[10px]">
                      <FilterCard a="CustomerKey" b="is (All)" />
                      <FilterCard a="ProductKey" b="is (All)" />
                      <FilterCard a="Sum of Sales Amount" b="is (All)" />
                      <AddCard h={67} />
                    </div>
                    <div className="h-[54px] mt-[24px] flex items-center text-[16.500px] text-[#444] whitespace-nowrap">Filters on this page<span className="ml-[102px] tracking-[2px] mt-[4px]">...</span></div>
                    <AddCard h={66} />
                  </div>
                  <div className="absolute left-[293px] top-[120px] w-[9px] h-[380px] bg-[#dedcd9] rounded-b-full" />
                </div>
              </div>
              {/* Page tabs */}
              <div className="flex-1 bg-[#f5f5f5] flex border-l border-[#e0e0e0] -ml-px">
                <div className="w-[60px] flex items-center justify-center gap-[24px] text-[#c8c8c8] text-[12px] border-r border-[#c8c8c8] shrink-0"><span>◂</span><span>▸</span></div>
                <div className="w-[114px] h-[53px] bg-white border-b-[6px] border-[#f2c811] flex items-center justify-center pt-[3px] text-[17px] text-[#333] shrink-0">Page 1</div>
                <div className="w-[58px] h-[48px] bg-[#f8d10d] flex items-center justify-center mt-[1px] shrink-0"><Plus size={22} strokeWidth={3.5} color="#6a6a5a" /></div>
              </div>
            </div>
            {/* Visualizations */}
            <div className="w-[272px] shrink-0 relative bg-[#f5f5f5] border-l border-[#dcdcdc] flex flex-col">
              <div className="h-[148px] border-b-2 border-[#bdbdbd] pl-[12px] shrink-0">
                <div className="h-[52px] flex items-center"><span className="text-[22px] font-semibold text-[#333] whitespace-nowrap">Visualizations</span><span className="ml-auto mr-[11px]"><Chevrons size={20} /></span></div>
                <div className="h-[22px] mt-[2px] leading-[22px] text-[16px] text-[#444]">Build visual</div>
                <div className="flex items-start mt-[4px]">
                  <div className="w-[48px] h-[44px] bg-[#d9d7d4] rounded-[2px] pt-[7px] pl-[6px]"><div className="w-[36px] h-[2px] bg-[#555]" /><div className="w-[36px] h-[14px] mt-[6px] bg-[#f8d10d] border-t-2 border-dashed border-[#555]" /></div>
                  <svg width="36" height="40" viewBox="0 0 36 40" fill="none" stroke="#555" strokeWidth="1.4" className="ml-[59px] mt-[3px]"><path d="M2 34V18h8V2h10v22M2 34h12" /><path d="M12 36l2-8 14-14 5 5-14 14-8 5z" fill="#f5f5f5" /></svg>
                  <svg width="38" height="40" viewBox="0 0 38 40" fill="none" stroke="#333" strokeWidth="1.6" className="ml-[59px] mt-[3px]"><circle cx="17" cy="17" r="15" /><path d="M28 28l9 10" strokeWidth="3" /><path d="M8 14l6 4 10-8" /><path d="M10 30v-8M15 31v-10M20 31v-8M25 28v-10" /></svg>
                </div>
              </div>
              <div className="pl-[10px] pt-[12px] h-[317px] shrink-0 border-b border-[#e4e0dc] overflow-hidden">
                <div className="grid grid-cols-[repeat(6,42px)] auto-rows-[42px]">
                  {vizIcons.map((ic, i) => (
                    <div key={i} className="flex items-center justify-center">
                      {i === 0 ? <div className="w-[36px] h-[36px] border-2 border-[#333] bg-[#eeeeee] flex items-center justify-center"><Ic s={27}>{ic}</Ic></div> : <Ic s={28}>{ic}</Ic>}
                    </div>
                  ))}
                  <div className="flex items-center justify-center text-[#222] text-[20px] tracking-[2px] font-bold leading-none pb-[10px]">...</div>
                </div>
              </div>
              <div className="flex-1 overflow-hidden relative">
                <div className="pt-[13px]">
                  <div className="ml-[18px] h-[22px] leading-[22px] text-[15px] text-[#555]">Y-axis</div>
                  <div className="mt-[11px]"><WellBox text="ProductKey" h={55} /></div>
                  <div className="ml-[18px] mt-[14px] h-[22px] leading-[22px] text-[15px] text-[#555]">X-axis</div>
                  <div className="mt-[12px]"><WellBox text="Sum of Sales Amount" h={45} /></div>
                  <div className="ml-[18px] mt-[13px] h-[22px] leading-[22px] text-[15px] text-[#555]">Legend</div>
                </div>
                <div className="absolute left-[262px] top-[5px] w-[8px] h-[70px] rounded-full bg-[#d4d4d0]" />
              </div>
              {/* Tooltip */}
              <div className="absolute left-[-49px] top-[102px] w-[161px] h-[45px] bg-white rounded-[3px] shadow-[0_2px_8px_rgba(0,0,0,0.18)] flex items-center justify-center text-[16px] text-[#333] whitespace-nowrap">Stacked bar chart</div>
              <div className="absolute left-[24px] top-[142px] w-[12px] h-[12px] rotate-45 bg-white" />
            </div>
            {/* Fields */}
            <div className="flex-1 min-w-0 relative bg-[#f5f5f5] border-l border-[#dcdcdc]">
              <div className="h-[52px] flex items-center pl-[11px]"><span className="text-[22px] font-semibold text-[#333]">Fields</span><span className="ml-auto mr-[11px]"><Chevrons size={20} /></span></div>
              <div className="ml-[6px] mt-[13px] w-[258px] h-[41px] bg-white border border-[#8a8886] rounded-[2px] flex items-center pl-[10px] text-[17px] text-[#666]">
                <Search size={22} strokeWidth={1.2} color="#444" className="-scale-x-100 mr-[9px]" />Search
              </div>
              <div className="mt-[15px]">
                <div className="h-[36px] flex items-center pl-[11px] text-[16px] text-[#555]"><ChevronRight size={24} strokeWidth={1} color="#444" className="-ml-[3px]" /><span className="ml-[2px] mr-[7px]"><TableIc /></span>Reseller_data</div>
                <div className="h-[36px] flex items-center pl-[8px] text-[16px] text-[#555] relative"><ChevronDown size={24} strokeWidth={1} color="#444" /><span className="ml-[2px] mr-[7px]"><TableIc /></span>Sales
                  <span className="absolute left-[43px] top-[18px] w-[18px] h-[18px] rounded-full bg-[#f8d10d] flex items-center justify-center"><Check size={11} strokeWidth={3} color="#333" /></span>
                </div>
                <Field name="CustomerKey" checked />
                <Field name="DueDateKey" sigma />
                <Field name="Extended Amo..." sigma />
                <Field name="Order Quantity" sigma />
                <Field name="OrderDateKey" sigma />
                <Field name="Product Standa..." sigma />
                <Field name="ProductKey" checked />
                <Field name="ResellerKey" />
                <Field name="Sales Amount" sigma checked />
                <Field name="SalesOrderLine..." />
                <Field name="SalesTerritoryKey" />
                <Field name="ShipDateKey" sigma />
                <Field name="Total Product C..." sigma />
              </div>
              <div className="absolute left-[252px] top-[248px] w-[12px] h-[290px] bg-[#cccccc]" />
            </div>
          </div>

          {/* Status bar */}
          <div className="h-[35px] shrink-0 bg-[#f5f5f5] border-t-2 border-[#e8e8e8] border-l-2 border-l-white flex items-center text-[15.500px] text-[#666]">
            <span className="ml-[7px] w-[79px] whitespace-nowrap">Page 1 of 1</span>
            <span className="ml-[1131px] w-[13px] text-center text-[18px] leading-none">-</span>
            <div className="w-[149px] h-[2px] bg-[#888] relative"><div className="absolute left-[59px] -top-[7px] w-[6px] h-[16px] bg-[#555]" /><div className="absolute left-[74px] -top-[3px] w-px h-[8px] bg-[#777]" /></div>
            <span className="ml-[8px] w-[10px] text-[18px] leading-none">+</span>
            <span className="ml-[24px] w-[40px] whitespace-nowrap text-[17px] tracking-[-0.6px]">84%</span>
            <span className="ml-[30px] w-[24px] h-[20px] border-2 border-[#666] flex items-center justify-center"><span className="w-[14px] h-[10px] border border-dashed border-[#666]" /></span>
            <span className="ml-[26px] whitespace-nowrap text-[17.500px] tracking-[-0.2px]">Update available (click to download)</span>
          </div>

          {/* Remote taskbar */}
          <div className="h-[61px] shrink-0 bg-black flex items-center border-t border-[#444] pt-[1px]">
            <Cell w={74}><FaWindows size={25} color="#fff" /></Cell>
            <Cell w={72}><Search size={26} strokeWidth={1.3} color="#eee" className="-scale-x-100" /></Cell>
            <Cell w={72}><svg width="32" height="26" viewBox="0 0 32 26" fill="none" stroke="#ddd" strokeWidth="1.3"><rect x="8" y="1" width="16" height="24" rx="1" /><path d="M5 5H1v16h4M27 5h4v16h-4" /></svg></Cell>
            <Cell w={80}><FaInternetExplorer size={36} color="#2aa7e8" /></Cell>
            <Cell w={60} className="h-[59px] border-b-[4px] border-[#67b0e8] ml-[3px]"><svg width="36" height="36" viewBox="0 0 36 36"><circle cx="18" cy="18" r="18" fill="#dd4b3e" /><path d="M18 18L2 8A18 18 0 0 0 14 36z" fill="#1a9c4a" /><path d="M18 10h16a18 18 0 0 1-20 26z" fill="#f6c315" /><circle cx="18" cy="18" r="8" fill="#fff" /><circle cx="18" cy="18" r="6" fill="#3b78e7" /></svg></Cell>
            <Cell w={86}><svg width="34" height="34" viewBox="0 0 34 34"><path d="M1 3h12l3 3h17v26h-32z" fill="#f6dc80" /><rect x="1" y="7" width="32" height="25" fill="#fbe79c" /><path d="M9 32v-11h16v11h-4v-6h-8v6z" fill="#3aa0da" /></svg></Cell>
            <Cell w={71} className="h-[59px] bg-[#333] border-b-[4px] border-[#67b0e8] -ml-[4px]"><svg width="30" height="36" viewBox="0 0 30 36"><rect x="18" y="0" width="12" height="36" fill="#d39a10" /><rect x="9" y="11" width="13" height="25" fill="#f2c811" /><rect x="1" y="20" width="12" height="16" fill="#f7d960" /></svg></Cell>
            <div className="ml-auto flex items-center text-white">
              <ChevronUp size={28} strokeWidth={1.2} color="#ddd" />
              <div className="ml-[6px] w-[28px] relative h-[28px] flex items-center"><svg width="18" height="24" viewBox="0 0 18 24" fill="none" stroke="#ddd" strokeWidth="1.3"><path d="M1 8v8h4l7 6V2l-7 6z" /></svg><span className="absolute left-[11px] top-[11px] w-[13px] h-[13px] rounded-full bg-[#e04040] text-[10px] leading-[13px] text-center font-bold">x</span></div>
              <Cell w={26} className="ml-[11px]"><svg width="26" height="26" viewBox="0 0 26 26" fill="none" stroke="#ddd" strokeWidth="1.2"><path d="M6 3h19v16h-19M12 19v4M7 24h12" /><rect x="1" y="3" width="6" height="14" /></svg></Cell>
              <div className="ml-[11px] w-[84px] text-center text-[17.500px] leading-[26px] tracking-[-0.4px] whitespace-nowrap"><div>11:15 AM</div><div>9/13/2023</div></div>
              <div className="ml-[28px] mr-[35px] relative w-[24px] h-[28px]"><svg width="24" height="26" viewBox="0 0 24 26" fill="#fff"><path d="M0 0h24v20h-14l-5 5v-5h-5z" /><path d="M4 6h16M4 10h16M4 14h10" stroke="#333" /></svg><span className="absolute left-[9px] top-[11px] w-[24px] h-[24px] rounded-full bg-[#333] border border-[#666] text-white text-[15px] leading-[22px] text-center">1</span></div>
            </div>
          </div>
        </div>

        {/* Edge sidebar */}
        <div className="flex-1 bg-[#3b3b3b] flex flex-col items-center pt-[14px] shrink-0">
          <div className="h-[30px]"><svg width="30" height="30" viewBox="0 0 30 30" fill="none"><circle cx="12" cy="12" r="9" fill="#175e8c" stroke="#bbb" strokeWidth="3" /><path d="M19 19l8 9" stroke="#d050d0" strokeWidth="4" /></svg></div>
          <div className="h-[40px] mt-[33px]"><svg width="26" height="40" viewBox="0 0 26 40"><path d="M6 1c8 0 18 8 18 10v14L8 32 2 25V5z" fill="#2e7dd9" /><path d="M24 11v14c0 4-8 14-18 14l-4-8c10 0 14-8 14-14z" fill="#a86ee0" /><path d="M10 14l8 4-6 6z" fill="#3b3b3b" /></svg></div>
          <div className="h-[36px] mt-[22px]"><OutlookLogo s={36} /></div>
          <div className="mt-[27px]"><Plus size={24} strokeWidth={1.2} color="#eee" /></div>
          <div className="mt-auto w-[42px] h-px bg-[#666] mb-[21px]" />
          <PanelRight size={24} strokeWidth={1.5} color="#eee" className="mb-[35px]" />
          <Settings size={26} strokeWidth={1.2} color="#eee" className="mb-[20px]" />
        </div>
      </div>

      {/* Windows 11 taskbar */}
      <div className="h-[72px] shrink-0 border-t-2 border-[#3a3f48] bg-[linear-gradient(90deg,#20252d_0%,#1c2333_25%,#172058_42%,#171f5a_55%,#1e2436_72%,#22252c_100%)] flex items-center text-white">
        <div className="ml-[576px] w-[35px] h-[35px] grid grid-cols-2 gap-[1.500px] shrink-0">
          <div className="bg-[#6ed6fb] rounded-tl-[2px]" /><div className="bg-[#4ac4f6] rounded-tr-[2px]" /><div className="bg-[#28aef2] rounded-bl-[2px]" /><div className="bg-[#1496ee] rounded-br-[2px]" />
        </div>
        <div className="ml-[20px] w-[329px] h-[47px] rounded-full bg-[#3a4470] border border-[#50597f] flex items-center pl-[16px] text-[18px] text-[#ddd] shrink-0">
          <Search size={24} strokeWidth={2} color="#fff" className="-scale-x-100 mr-[15px]" />Search
        </div>
        <Cell w={68} className="ml-[3px]"><div className="relative w-[37px] h-[35px]"><div className="absolute left-0 bottom-0 w-[27px] h-[25px] bg-[#555] rounded-[2px]" /><div className="absolute right-0 top-0 w-[27px] h-[25px] bg-[#eeeeee]/90 rounded-[2px]" /></div></Cell>
        <Cell w={63}><svg width="36" height="34" viewBox="0 0 36 34"><path d="M0 2h12l3 3h21v27h-36z" fill="#e0a010" /><rect y="6" width="36" height="26" fill="#ffce48" /><path d="M6 32v-8a4 4 0 0 1 4-4h16a4 4 0 0 1 4 4v8z" fill="#0c78d2" /></svg></Cell>
        <Cell w={68}><div className="relative w-[35px] h-[36px]"><div className="absolute top-[4px] left-0 right-0 bottom-0 bg-white rounded-b-[6px] grid grid-cols-2 gap-[1px] p-[9px] pt-[8px]"><div className="bg-[#f25022]" /><div className="bg-[#7fba00]" /><div className="bg-[#00a4ef]" /><div className="bg-[#ffb900]" /></div><div className="absolute top-0 left-[8px] w-[19px] h-[6px] border-2 border-b-0 border-[#29b6e8]" /></div></Cell>
        <Cell w={60} className="h-[60px] bg-[#2c3560] rounded-[6px] relative">
          <svg width="36" height="38" viewBox="0 0 36 38"><path d="M2 16C4 6 12 1 20 1c9 0 15 7 16 15 0 3-2 6-6 6-3 0-5-2-6-5-2-5-8-7-12-4-3 2-3 6-3 10-3-2-7-3-7-7z" fill="#30c8a0" /><path d="M2 16c-3 10 4 20 14 20 6 0 12-3 16-10-5 3-12 3-16 0-3-3-3-8-1-12-5-1-11 0-13 2z" fill="#1566b0" /><rect x="0" y="22" width="18" height="14" rx="1" fill="#c07a10" /></svg>
          <span className="absolute bottom-[2px] left-[18px] w-[24px] h-[5px] rounded-full bg-[#5cc4fa]" />
        </Cell>
        <Cell w={75} className="h-[60px] relative">
          <svg width="36" height="34" viewBox="0 0 36 34"><circle cx="20" cy="6" r="5" fill="#7b83eb" /><path d="M10 14h24v10a9 9 0 0 1-18 6z" fill="#7b83eb" /><rect x="0" y="8" width="18" height="18" rx="1" fill="#4b53bc" /><text x="9" y="22" textAnchor="middle" fontSize="13" fontWeight="700" fill="#fff" fontFamily="Liberation Sans">T</text></svg>
          <span className="absolute right-[9px] top-[-1px] w-[20px] h-[20px] rounded-full bg-[#c4152f] text-white text-[14px] leading-[20px] text-center">6</span>
          <span className="absolute bottom-[2px] left-[33px] w-[9px] h-[5px] rounded-full bg-[#888]" />
        </Cell>
        <Cell w={60} className="h-[60px] bg-[#44282a] rounded-[6px] relative">
          <OutlookLogo s={36} />
          <span className="absolute bottom-[2px] left-[25px] w-[9px] h-[5px] rounded-full bg-[#f4a0a8]" />
        </Cell>
        <div className="ml-auto flex items-center">
          <ChevronUp size={24} strokeWidth={1.6} color="#fff" />
          <svg width="26" height="18" viewBox="0 0 26 18" className="ml-[25px]"><path d="M5 17a5 5 0 0 1-1-10C6 1 14-1 17 6c5-1 9 3 8 7-1 3-3 4-5 4z" fill="#1a8fe0" /></svg>
          <div className="ml-[14px] w-[60px] text-center text-[17px] leading-[24px]"><div>ENG</div><div>IN</div></div>
          <Wifi size={26} strokeWidth={1.6} color="#fff" className="ml-[14px]" />
          <Volume2 size={26} strokeWidth={1.4} color="#fff" className="ml-[9px]" />
          <Battery size={28} strokeWidth={1.4} color="#fff" className="ml-[9px]" />
          <div className="ml-[15px] text-right text-[18px] leading-[25px] w-[91px]"><div className="whitespace-nowrap">11:15 AM</div><div className="whitespace-nowrap">9/13/2023</div></div>
          <span className="ml-[12px] mr-[30px] w-[23px] h-[28px] rounded-full bg-[#4cc2ff] text-[#1a1a1a] text-[15px] leading-[28px] text-center">6</span>
        </div>
      </div>
    </div>
  );
}
